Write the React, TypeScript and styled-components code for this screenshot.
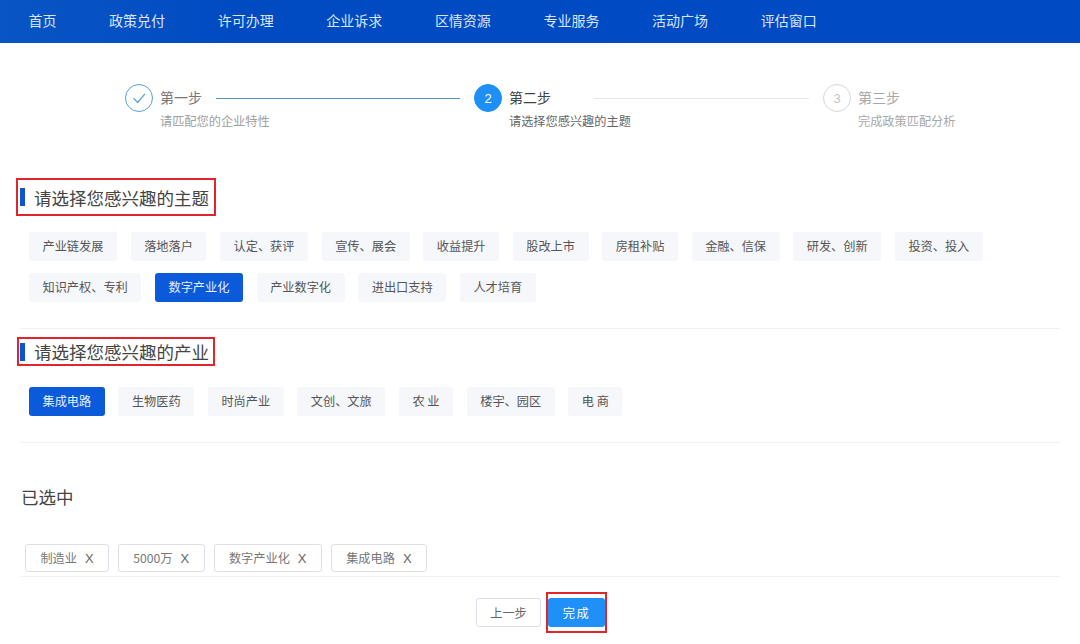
import React from "react";
import styled, { createGlobalStyle } from "styled-components";

const navItems = ["首页", "政策兑付", "许可办理", "企业诉求", "区情资源", "专业服务", "活动广场", "评估窗口"];
const topicTags = [
  "产业链发展", "落地落户", "认定、获评", "宣传、展会", "收益提升", "股改上市", "房租补贴", "金融、信保", "研发、创新", "投资、投入",
  "知识产权、专利", "数字产业化", "产业数字化", "进出口支持", "人才培育",
];
const industryTags = ["集成电路", "生物医药", "时尚产业", "文创、文旅", "农 业", "楼宇、园区", "电 商"];
const selected = ["制造业", "5000万", "数字产业化", "集成电路"];

const GlobalStyle = createGlobalStyle`
  body {
    margin: 0;
    background: #fff;
    font-family: "Noto Sans CJK SC", "Liberation Sans", sans-serif;
  }
`;

const Nav = styled.nav`
  display: flex;
  align-items: center;
  gap: 52.6px;
  box-sizing: border-box;
  height: 43px;
  padding: 0 28.5px 3px;
  background: linear-gradient(100deg, #0a55c4 0%, #004bc2 22%, #004bc4 100%);
  color: #d9e6fa;
  font-size: 14px;
`;

const Stepper = styled.div`
  display: flex;
  padding: 41px 0 0 125px;
  height: 56px;
`;

const Step = styled.div`
  display: grid;
  flex: none;
  grid-template-columns: 28px 1fr;
  grid-template-rows: 28px auto;
  column-gap: 7px;
  align-items: center;
  width: 349px;
  height: 44px;
  &:last-child {
    width: 140px;
  }
`;

const Circle = styled.div<{ $state: "done" | "active" | "todo" }>`
  display: flex;
  align-items: center;
  justify-content: center;
  box-sizing: border-box;
  width: 28px;
  height: 28px;
  border-radius: 50%;
  font-size: 13px;
  font-family: "Liberation Sans", sans-serif;
  color: ${({ $state }) => ($state === "active" ? "#fff" : "#c4c4c4")};
  background: ${({ $state }) => ($state === "active" ? "#1e90f5" : "#fff")};
  border: 1px solid ${({ $state }) => ($state === "done" ? "#5aa0cf" : $state === "active" ? "#1e90f5" : "#d8d8d8")};
`;

const StepHead = styled.div`
  display: flex;
  align-items: center;
`;

const StepTitle = styled.span<{ $color: string }>`
  margin-top: -2px;
  font-size: 14px;
  color: ${({ $color }) => $color};
`;

const StepLine = styled.div<{ $color: string; $inset: number }>`
  flex: 1;
  height: 1px;
  margin: 0 14px 0 ${({ $inset }) => $inset}px;
  background: ${({ $color }) => $color};
`;

const StepSub = styled.div<{ $color: string }>`
  grid-column: 2;
  margin-top: 1px;
  font-size: 12.2px;
  line-height: 16px;
  color: ${({ $color }) => $color};
`;

const TitleBox = styled.div<{ $height: number; $left: number; $width: number; $top: number }>`
  display: flex;
  align-items: center;
  box-sizing: border-box;
  width: ${({ $width }) => $width}px;
  height: ${({ $height }) => $height}px;
  margin: ${({ $top }) => $top}px 0 0 ${({ $left }) => $left}px;
  padding-left: ${({ $left }) => 20 - $left - 2}px;
  border: 2px solid #e0262c;
`;

const Bar = styled.span`
  width: 5px;
  height: 18px;
  margin-right: 9px;
  background: #0b56cf;
`;

const TitleText = styled.h2`
  margin: 0;
  font-size: 17.5px;
  font-weight: 400;
  color: #444;
`;

const TagWrap = styled.div<{ $top: number }>`
  display: flex;
  flex-wrap: wrap;
  gap: 12px 13.7px;
  margin-top: ${({ $top }) => $top}px;
  padding: 0 20px 0 29px;
`;

const Tag = styled.span<{ $active?: boolean }>`
  display: flex;
  align-items: center;
  box-sizing: border-box;
  height: 29px;
  padding: 0 13.5px 1px;
  border-radius: 3px;
  font-size: 12.2px;
  white-space: pre;
  color: ${({ $active }) => ($active ? "#e4eefc" : "#555")};
  background: ${({ $active }) => ($active ? "#0b5ad9" : "#f5f7fa")};
`;

const Divider = styled.div<{ $top: number }>`
  height: 1px;
  margin: ${({ $top }) => $top}px 20px 0 21px;
  background: #eef0f3;
`;

const SelectedTitle = styled.h3`
  margin: 41px 0 0 21px;
  font-size: 17.5px;
  line-height: 26px;
  font-weight: 400;
  color: #444;
`;

const ChipRow = styled.div`
  display: flex;
  gap: 8.9px;
  margin-top: 34px;
  padding-left: 25px;
`;

const Chip = styled.span`
  display: flex;
  align-items: center;
  gap: 8px;
  box-sizing: border-box;
  height: 28px;
  padding: 0 14.4px;
  border: 1px solid #dcdfe6;
  border-radius: 3px;
  font-size: 12.2px;
  color: #777;
`;

const ChipClose = styled.span`
  font-family: "Liberation Sans", sans-serif;
  font-size: 13px;
  color: #666;
`;

const Actions = styled.div`
  display: flex;
  justify-content: center;
  align-items: center;
  gap: 5px;
  margin-top: 15px;
  padding-left: 3px;
`;

const BackButton = styled.button`
  box-sizing: border-box;
  width: 65px;
  height: 29px;
  padding: 0;
  border: 1px solid #dcdfe6;
  border-radius: 3px;
  background: #fff;
  font: inherit;
  font-size: 12.2px;
  color: #666;
`;

const Highlight = styled.div`
  display: flex;
  align-items: center;
  justify-content: center;
  box-sizing: border-box;
  width: 61px;
  height: 41px;
  border: 2px solid #e0262c;
`;

const DoneButton = styled.button`
  width: 57px;
  height: 29px;
  padding: 0;
  border: 0;
  border-radius: 3px;
  background: #1f90f8;
  font: inherit;
  font-size: 12.2px;
  letter-spacing: 1.5px;
  color: #fff;
`;

export default function App() {
  return (
    <>
      <GlobalStyle />
      <Nav>
        {navItems.map((item) => (
          <span key={item}>{item}</span>
        ))}
      </Nav>

      <Stepper>
        <Step>
          <Circle $state="done">
            <svg width="16" height="16" viewBox="0 0 16 16" fill="none" stroke="#5aa0cf" strokeWidth="1.2">
              <path d="M2.5 8.2 6.6 12.5 14 3.8" />
            </svg>
          </Circle>
          <StepHead>
            <StepTitle $color="#777">第一步</StepTitle>
            <StepLine $color="#4d93c4" $inset={14} />
          </StepHead>
          <StepSub $color="#a0a0a0">请匹配您的企业特性</StepSub>
        </Step>
        <Step>
          <Circle $state="active">2</Circle>
          <StepHead>
            <StepTitle $color="#444">第二步</StepTitle>
            <StepLine $color="#e4e6e9" $inset={43} />
          </StepHead>
          <StepSub $color="#666">请选择您感兴趣的主题</StepSub>
        </Step>
        <Step>
          <Circle $state="todo">3</Circle>
          <StepHead>
            <StepTitle $color="#a8a8a8">第三步</StepTitle>
          </StepHead>
          <StepSub $color="#a8a8a8">完成政策匹配分析</StepSub>
        </Step>
      </Stepper>

      <TitleBox $top={38} $left={16} $width={200} $height={38}>
        <Bar />
        <TitleText>请选择您感兴趣的主题</TitleText>
      </TitleBox>
      <TagWrap $top={16}>
        {topicTags.map((tag) => (
          <Tag key={tag} $active={tag === "数字产业化"}>
            {tag}
          </Tag>
        ))}
      </TagWrap>
      <Divider $top={26} />

      <TitleBox $top={8} $left={17} $width={198} $height={29}>
        <Bar />
        <TitleText>请选择您感兴趣的产业</TitleText>
      </TitleBox>
      <TagWrap $top={21}>
        {industryTags.map((tag) => (
          <Tag key={tag} $active={tag === "集成电路"}>
            {tag}
          </Tag>
        ))}
      </TagWrap>
      <Divider $top={26} />

      <SelectedTitle>已选中</SelectedTitle>
      <ChipRow>
        {selected.map((chip) => (
          <Chip key={chip}>
            {chip}
            <ChipClose>X</ChipClose>
          </Chip>
        ))}
      </ChipRow>
      <Divider $top={4} />

      <Actions>
        <BackButton>上一步</BackButton>
        <Highlight>
          <DoneButton>完成</DoneButton>
        </Highlight>
      </Actions>
    </>
  );
}
